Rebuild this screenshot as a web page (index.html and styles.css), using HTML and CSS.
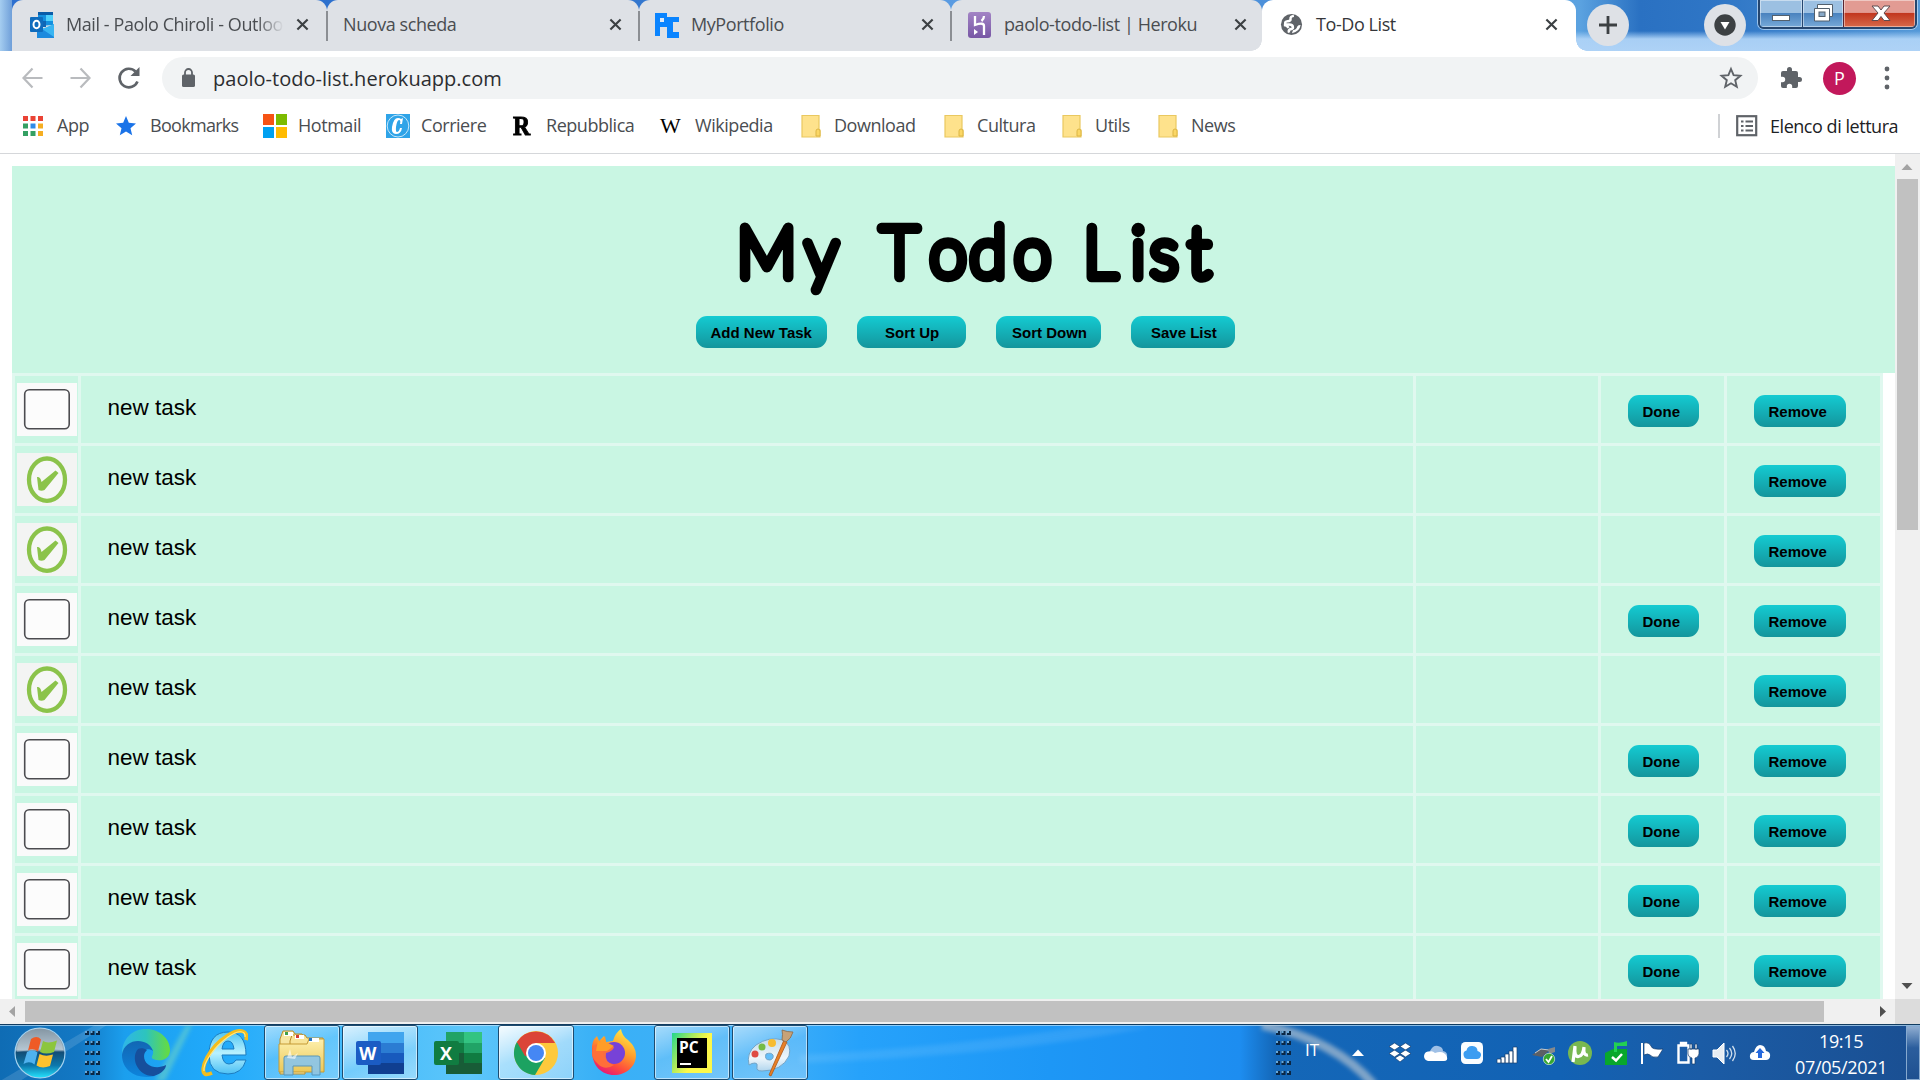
FILE: index.html
```html
<!DOCTYPE html>
<html lang="it">
<head>
<meta charset="utf-8">
<title>To-Do List</title>
<link rel="stylesheet" href="styles.css">
</head>
<body>
<svg class="defs" width="0" height="0">
  <defs>
    <symbol id="close" viewBox="0 0 14 14"><path d="M1.500 1.500l11 11M12.500 1.500l-11 11" stroke="#3c4043" stroke-width="2.300" fill="none"/></symbol>
    <symbol id="folder" viewBox="0 0 20 24"><path d="M1 1.500h17v14.500h1v7H1z" fill="#fee28c" stroke="#e9c860" stroke-width="1.200"/><path d="M15 22v-5a2 2 0 0 1 4 0v5z" fill="#fbd766" stroke="#dcb645"/></symbol>
    <symbol id="empty" viewBox="0 0 60 53"><rect width="60" height="53" fill="#fafafa"/><rect x="7.700" y="6.700" width="44.500" height="39" rx="4.500" fill="#fcfcfc" stroke="#4c4c50" stroke-width="1.600"/></symbol>
    <symbol id="checked" viewBox="0 0 60 53"><rect width="60" height="53" fill="#f3f4f3"/><ellipse cx="30" cy="26.700" rx="18" ry="21.200" fill="#f6f7f5" stroke="#8bc34a" stroke-width="4.300"/><path d="M20 24q3.500-.500 4.500 5L38.500 17.500l3 2.500L27.500 37q-3 1.500-6 0z" fill="#8bc34a"/></symbol>
    <symbol id="grip" viewBox="0 0 15 46"><g fill="#0b2745"><path d="M0 1h4v4H0zM5.500 1h4v4h-4zM11 1h4v4h-4zM0 11h4v4H0zM5.500 11h4v4h-4zM11 11h4v4h-4zM0 21h4v4H0zM5.500 21h4v4h-4zM11 21h4v4h-4zM0 31h4v4H0zM5.500 31h4v4h-4zM11 31h4v4h-4zM0 41h4v4H0zM5.500 41h4v4h-4zM11 41h4v4h-4z"/></g><g fill="#6aa9d8"><path d="M0 1h2v2H0zM5.500 1h2v2h-2zM11 1h2v2h-2zM0 11h2v2H0zM5.500 11h2v2h-2zM11 11h2v2h-2zM0 21h2v2H0zM5.500 21h2v2h-2zM11 21h2v2h-2zM0 31h2v2H0zM5.500 31h2v2h-2zM11 31h2v2h-2zM0 41h2v2H0zM5.500 41h2v2h-2zM11 41h2v2h-2z"/></g></symbol>
    <linearGradient id="gOrb" x2="0" y2="1"><stop offset="0" stop-color="#5a7183"/><stop offset=".44" stop-color="#9db4c4"/><stop offset=".48" stop-color="#124c75"/><stop offset=".75" stop-color="#0c78ad"/><stop offset="1" stop-color="#25e5ff"/></linearGradient>
    <linearGradient id="gEdge"><stop offset="0" stop-color="#2fb5ea"/><stop offset=".5" stop-color="#2dc4bd"/><stop offset="1" stop-color="#68dc3c"/></linearGradient>
    <linearGradient id="gEdgeB" x2="0" y2="1"><stop offset="0" stop-color="#1266b4"/><stop offset="1" stop-color="#0d84dc"/></linearGradient>
    <linearGradient id="gIe" x2="0" y2="1"><stop offset="0" stop-color="#4fc5f2"/><stop offset=".5" stop-color="#b8f1ff"/><stop offset="1" stop-color="#4cc0f4"/></linearGradient>
    <linearGradient id="gFold" x2="0" y2="1"><stop offset="0" stop-color="#fdf0ae"/><stop offset="1" stop-color="#ecc857"/></linearGradient>
    <linearGradient id="gFire" x1=".8" x2=".3" y2="1"><stop offset="0" stop-color="#fff04a"/><stop offset=".45" stop-color="#ff9a2a"/><stop offset=".75" stop-color="#ff4c3d"/><stop offset="1" stop-color="#e3167c"/></linearGradient>
    <linearGradient id="gPc" y2=".6"><stop offset="0" stop-color="#20d78c"/><stop offset=".45" stop-color="#b6ec5a"/><stop offset=".7" stop-color="#fcf84a"/></linearGradient>
    <linearGradient id="gPal" x2="0" y2="1"><stop offset="0" stop-color="#c5dcea"/><stop offset=".6" stop-color="#eef6fb"/><stop offset="1" stop-color="#b2d6ee"/></linearGradient>
    <linearGradient id="gHk" x2="0" y2="1"><stop offset="0" stop-color="#a384c5"/><stop offset="1" stop-color="#7857a5"/></linearGradient>
  </defs>
</svg>

<div class="tabstrip">
  <div class="tab first">
    <svg class="fav" viewBox="0 0 24 26"><path d="M8 0h15v13L8 14z" fill="#1490df"/><path d="M8 0h15v3H8z" fill="#0a5ca8"/><path d="M16 3h7v6h-7z" fill="#50d0fa"/><path d="M8 9h8v6H8z" fill="#1066b5"/><path d="M7 13l9 5 8-6v14H7z" fill="#1c8ade"/><path d="M24 12v13L12 17z" fill="#39b5f2"/><rect y="5" width="13" height="15" rx="1" fill="#0f6cbd"/><ellipse cx="6.500" cy="12.500" rx="3" ry="3.800" fill="none" stroke="#fff" stroke-width="2"/></svg>
    <span class="title faded">Mail - Paolo Chiroli - Outloo</span><svg class="x"><use href="#close"/></svg>
  </div>
  <div class="tab plain"><span class="title">Nuova scheda</span><svg class="x"><use href="#close"/></svg></div>
  <div class="tab">
    <svg class="fav" viewBox="0 0 24 26"><path d="M0 1h12v4h12v5h-6v10h6v6H12V15H5v9H0z" fill="#0a84ff"/><path d="M5 6h4v4H5z" fill="#dfe9f5"/></svg>
    <span class="title">MyPortfolio</span><svg class="x"><use href="#close"/></svg>
  </div>
  <div class="tab before">
    <svg class="fav" viewBox="0 0 24 26"><rect width="23" height="26" rx="3" fill="url(#gHk)"/><path d="M7 4v9q9-3 9 1v9M16 4q0 3-2.500 5" fill="none" stroke="#fff" stroke-width="2.300"/><path d="M6 17l4 3-4 3z" fill="#fff"/></svg>
    <span class="title">paolo-todo-list | Heroku</span><svg class="x"><use href="#close"/></svg>
  </div>
  <div class="tab active">
    <svg class="fav globe" viewBox="0 0 24 26"><circle cx="12" cy="13" r="11" fill="#5f6368"/><path d="M14.500 4q-4 .500-3.500 3.500 0 2-3 2-3 .500-2.500 2.500.500 1 4 1 4 0 4 3 0 1.500-3 2-2 1-1 3.500M4 13.500q3 0 5 3" fill="none" stroke="#fff" stroke-width="2.600"/><path d="M12.500 22l1-3q4-1 4.500-4 1-1.500 3.500-1.500-1 7-9 8.500z" fill="#fff"/></svg>
    <span class="title">To-Do List</span><svg class="x"><use href="#close"/></svg>
  </div>
  <div class="round plus"><svg viewBox="0 0 42 42"><path d="M21 12v18M12 21h18" stroke="#3c4043" stroke-width="2.800"/></svg></div>
  <div class="round drop"><svg viewBox="0 0 42 42"><circle cx="21" cy="21" r="10.700" fill="#3c4043"/><path d="M16.500 18h9L21 25.500z" fill="#fff"/></svg></div>
  <div class="winbtns">
    <span class="wb min"><svg viewBox="0 0 42 27"><rect x="12.500" y="15.500" width="17" height="5" fill="#fff" stroke="#53606d"/></svg></span>
    <span class="wb max"><svg viewBox="0 0 41 27"><path d="M14.500 4.500h15v12h-15z" fill="#fff" stroke="#53606d"/><path d="M11.500 8.500h15v12.500h-15z" fill="#fff" stroke="#53606d"/><rect x="16" y="12" width="6" height="4.500" fill="#88a9c8" stroke="#53606d"/></svg></span>
    <span class="wb cls"><svg viewBox="0 0 72 27"><path d="M28 6h6l3 4 3-4h6l-6 7 6 7.500h-6l-3-4-3 4h-6l6-7.500z" fill="#fff" stroke="#5f4c50"/></svg></span>
  </div>
</div>

<div class="toolbar">
  <div class="nav">
    <svg viewBox="0 0 24 24"><path d="M21.500 12H3M11.500 2.500L2.500 12l9 9.500" fill="none" stroke="#b9bbbe" stroke-width="2.200"/></svg>
    <svg viewBox="0 0 24 24"><path d="M1.500 12H20M11.500 2.500l9 9.500-9 9.500" fill="none" stroke="#b9bbbe" stroke-width="2.200"/></svg>
    <svg viewBox="0 0 24 24"><path d="M20.500 15.500A9.300 9.300 0 1 1 18.500 5.500" fill="none" stroke="#5f6368" stroke-width="2.600"/><path d="M22.500 1v9h-9z" fill="#5f6368"/></svg>
  </div>
  <div class="omnibox">
    <svg class="lock" viewBox="0 0 14 20"><rect y="6.500" width="13" height="12.500" rx="1.600" fill="#5f6368"/><path d="M3 7V4.500a3.500 3.500 0 0 1 7 0V7" fill="none" stroke="#5f6368" stroke-width="1.800"/></svg>
    <span class="url">paolo-todo-list.herokuapp.com</span>
    <svg class="star" viewBox="0 0 24 24"><path d="M12 3l2.600 6.200 6.800.600-5.200 4.400 1.600 6.600-5.800-3.500-5.800 3.500 1.600-6.600-5.200-4.400 6.800-.600z" fill="none" stroke="#5f6368" stroke-width="1.900"/></svg>
  </div>
  <svg class="puzzle" viewBox="0 0 24 24"><path d="M20.500 11H19V7a2 2 0 0 0-2-2h-4V3.500a2.500 2.500 0 0 0-5 0V5H4a2 2 0 0 0-2 2v3.800h1.500a2.700 2.700 0 0 1 0 5.400H2V20a2 2 0 0 0 2 2h3.800v-1.500a2.700 2.700 0 0 1 5.400 0V22H17a2 2 0 0 0 2-2v-4h1.500a2.500 2.500 0 0 0 0-5z" fill="#5f6368"/></svg>
  <span class="avatar">P</span>
  <svg class="dots" viewBox="0 0 6 24"><g fill="#5f6368"><circle cx="3" cy="3" r="2.400"/><circle cx="3" cy="12" r="2.400"/><circle cx="3" cy="21" r="2.400"/></g></svg>
</div>

<div class="bookmarks">
  <div class="bm"><svg viewBox="0 0 20 24"><path d="M0 2h5v5H0zM7.500 2h5v5h-5zM15 2h5v5h-5z" fill="#ea4335"/><path d="M0 9.500h5v5H0zM0 17h5v5H0zM7.500 17h5v5h-5z" fill="#34a063"/><path d="M7.500 9.500h5v5h-5z" fill="#2d8be8"/><path d="M15 9.500h5v5h-5zM15 17h5v5h-5z" fill="#f5ae22"/></svg><span class="s1">App</span></div>
  <div class="bm"><svg viewBox="0 0 20 24"><path d="M10 2l2.800 6.800 7.200.600-5.500 4.800 1.700 7L10 17.500l-6.200 3.700 1.700-7L0 9.400l7.200-.600z" fill="#1a73e8"/></svg><span class="s1 tight">Bookmarks</span></div>
  <div class="bm"><svg viewBox="0 0 24 24"><path d="M0 0h11v11H0z" fill="#f65314"/><path d="M13 0h11v11H13z" fill="#7cbb00"/><path d="M0 13h11v11H0z" fill="#00a1f1"/><path d="M13 13h11v11H13z" fill="#ffbb00"/></svg><span class="s2">Hotmail</span></div>
  <div class="bm"><svg viewBox="0 0 24 24"><rect width="24" height="24" fill="#2fa4e8"/><ellipse cx="12" cy="12" rx="10.800" ry="11" fill="none" stroke="#c7e7fa"/><path d="M17 4l-1 6h-2q1-4-1-4-2 0-3 7-.500 5 1 5 2 0 3-4h2q-1 6-6 6-5 0-4-7Q7.500 4 12 4q2 0 3 1z" fill="#fff"/></svg><span class="s2">Corriere</span></div>
  <div class="bm"><b class="letter r">R</b><span>Repubblica</span></div>
  <div class="bm"><b class="letter w">W</b><span class="s2">Wikipedia</span></div>
  <div class="bm"><svg viewBox="0 0 20 24"><use href="#folder"/></svg><span>Download</span></div>
  <div class="bm"><svg viewBox="0 0 20 24"><use href="#folder"/></svg><span>Cultura</span></div>
  <div class="bm"><svg viewBox="0 0 20 24"><use href="#folder"/></svg><span>Utils</span></div>
  <div class="bm"><svg viewBox="0 0 20 24"><use href="#folder"/></svg><span>News</span></div>
  <div class="bm reading"><svg viewBox="0 0 22 24"><rect x="1.200" y="2.200" width="19" height="19" fill="none" stroke="#5f6368" stroke-width="2.200"/><path d="M5 7.500h2.500M9.500 7.500h7.500M5 12h2.500M9.500 12h7.500M5 16.500h2.500M9.500 16.500h7.500" stroke="#5f6368" stroke-width="2.200"/></svg><span>Elenco di lettura</span></div>
</div>

<div class="viewport">
  <div class="page">
    <header class="hero">
      <svg class="heading" viewBox="0 0 500 96" role="heading" aria-level="1">
        <g class="brush" transform="scale(.95 1)">
          <text y="71" x="1 73">My</text>
          <text y="71" x="152 204 246 293">Todo</text>
          <text y="71" x="366 416 436 476">List</text>
        </g>
        <circle cx="401.500" cy="23.500" r="5"/>
      </svg>
      <div class="actions">
        <button class="btn add">Add New Task</button><button class="btn up">Sort Up</button><button class="btn down">Sort Down</button><button class="btn save">Save List</button>
      </div>
    </header>
    <div class="tasks">
      <div class="cell"><svg class="mark"><use href="#empty"/></svg></div><div class="cell name">new task</div><div class="cell"></div><div class="cell act"><button class="btn">Done</button></div><div class="cell act"><button class="btn rem">Remove</button></div>
      <div class="cell"><svg class="mark"><use href="#checked"/></svg></div><div class="cell name">new task</div><div class="cell"></div><div class="cell"></div><div class="cell act"><button class="btn rem">Remove</button></div>
      <div class="cell"><svg class="mark"><use href="#checked"/></svg></div><div class="cell name">new task</div><div class="cell"></div><div class="cell"></div><div class="cell act"><button class="btn rem">Remove</button></div>
      <div class="cell"><svg class="mark"><use href="#empty"/></svg></div><div class="cell name">new task</div><div class="cell"></div><div class="cell act"><button class="btn">Done</button></div><div class="cell act"><button class="btn rem">Remove</button></div>
      <div class="cell"><svg class="mark"><use href="#checked"/></svg></div><div class="cell name">new task</div><div class="cell"></div><div class="cell"></div><div class="cell act"><button class="btn rem">Remove</button></div>
      <div class="cell"><svg class="mark"><use href="#empty"/></svg></div><div class="cell name">new task</div><div class="cell"></div><div class="cell act"><button class="btn">Done</button></div><div class="cell act"><button class="btn rem">Remove</button></div>
      <div class="cell"><svg class="mark"><use href="#empty"/></svg></div><div class="cell name">new task</div><div class="cell"></div><div class="cell act"><button class="btn">Done</button></div><div class="cell act"><button class="btn rem">Remove</button></div>
      <div class="cell"><svg class="mark"><use href="#empty"/></svg></div><div class="cell name">new task</div><div class="cell"></div><div class="cell act"><button class="btn">Done</button></div><div class="cell act"><button class="btn rem">Remove</button></div>
      <div class="cell"><svg class="mark"><use href="#empty"/></svg></div><div class="cell name">new task</div><div class="cell"></div><div class="cell act"><button class="btn">Done</button></div><div class="cell act"><button class="btn rem">Remove</button></div>
    </div>
  </div>
  <div class="vbar">
    <svg viewBox="0 0 25 25"><path d="M6.500 16h11L12 10z" fill="#a3a3a3"/></svg>
    <div class="vthumb"></div>
    <svg class="end" viewBox="0 0 25 25"><path d="M6.500 9h11L12 15z" fill="#505050"/></svg>
  </div>
  <div class="hbar">
    <svg viewBox="0 0 25 25"><path d="M15 7v11l-6-5.500z" fill="#a3a3a3"/></svg>
    <div class="hthumb"></div>
    <svg class="end" viewBox="0 0 25 25"><path d="M10 7v11l6-5.500z" fill="#505050"/></svg>
  </div>
  <div class="corner"></div>
</div>

<div class="taskbar">
  <svg class="streaks" viewBox="0 0 1920 56" preserveAspectRatio="none">
    <path d="M0 56L95 0h12L20 56z" fill="#fff" opacity=".13"/>
    <path class="soft" d="M155 56L186 0h6l-27 56z" fill="#b6ff9c" opacity=".3"/>
    <path class="soft" d="M800 30Q950 22 1080 2h70Q1010 30 800 38z" fill="#fff" opacity=".09"/>
    <path class="soft" d="M1262 0Q1335 15 1374 60" fill="none" stroke="#b9c6d2" stroke-width="9" opacity=".65"/>
  </svg>
  <svg class="orb" viewBox="0 0 52 52"><circle cx="26" cy="26" r="25" fill="url(#gOrb)" stroke="#a6d2ee" stroke-width="1.200"/><path d="M3 25a23 23 0 0 1 46-2Q26 20 3 25z" fill="#fff" opacity=".25"/><path d="M17 12q6-4 10 .500l-3 12q-5-4-10-1z" fill="#ef5b26"/><path d="M29 14q5 3 14-.500l-3 11.500q-8 3-14 0z" fill="#8cc63e"/><path d="M13 25q6-3 10.500.500l-3 12q-5-4-11-.500z" fill="#4fb2ee"/><path d="M25.500 27q6 3 13.500.500l-3 11.500q-8 3-13.500-.500z" fill="#fdc22d"/></svg>
  <svg class="grip"><use href="#grip"/></svg>
  <div class="apps">
    <span class="app"><svg viewBox="0 0 48 48"><path d="M0 25C0 10 10 0 24 0s24 10 24 21c0 10-10 12-17 9-3-2 1-4 0-8C29 13 8 9 0 25z" fill="url(#gEdge)"/><path d="M0 26c2-18 27-18 31-4-5-4-14-1-14 8s7 17 16 17C15 51 0 42 0 26z" fill="url(#gEdgeB)"/><path d="M16 20c-8 9 0 28 16 27 7-2 12-7 12-11-10 5-22 1-22-9 0-3 2-5 3-6-3-2-7-2-9-1z" fill="#164f9c"/></svg></span>
    <span class="app"><svg viewBox="0 0 48 48"><path d="M9 26q0-23 19-23 18 0 18 23H22q1 9 7 9 5 0 7-4h10q-4 14-18 14Q9 45 9 26zm13-6h12q-1-8-6-8t-6 8z" fill="url(#gIe)" stroke="#1c7cc0"/><path d="M46 11C49 2 40-2 27 7 9 18-1 41 5 45q2 1 7-1" fill="none" stroke="#f5bd1c" stroke-width="3.800"/><path d="M45 8C46 1 38 1 28 8 14 18 3 34 4 42" fill="none" stroke="#ffe887" stroke-width="1.200"/></svg></span>
    <span class="app on"><svg viewBox="0 0 48 48"><path d="M2 10L5 2h10l2 3h7l3 4v36H2z" fill="#f7e6a2" stroke="#b78d2c"/><path d="M12 12l2-6h13l2 3h16v32H12z" fill="#f8e497" stroke="#b78d2c"/><path d="M1 15h28l2-5h15v33H1z" fill="url(#gFold)" stroke="#c69b35"/><path d="M6 3h9v4H6z" fill="#fff"/><path d="M7 3h3v3H7z" fill="#41a047"/><path d="M17 6h9v4h-9z" fill="#fff"/><path d="M18 6h3v3h-3z" fill="#d33c32"/><path d="M31 9h10v4H31z" fill="#fff"/><path d="M31 9h3v3h-3z" fill="#2674c4"/><path d="M6 29q0-2 2-2h32q2 0 2 2v17h-8v-9H15v9H6z" fill="#8ec6e6" stroke="#5593b9" opacity=".95"/><path d="M9 29l3-9 2 8 6-4-3 6z" fill="#fff" opacity=".6"/></svg></span>
    <span class="app on bright"><svg viewBox="0 0 48 48"><path d="M12 3h36v11H12z" fill="#41a5ee"/><path d="M12 14h36v10H12z" fill="#2b7cd3"/><path d="M12 24h36v10H12z" fill="#185abd"/><path d="M12 34h36v11H12z" fill="#103f91"/><rect y="12" width="25" height="24" rx="2" fill="#1b5cc4"/><text class="office" x="3" y="30.500">W</text></svg></span>
    <span class="app"><svg viewBox="0 0 48 48"><path d="M12 3h36v42H12z" fill="#21a366"/><path d="M30 3h18v11H30z" fill="#33c481"/><path d="M12 14h18v10H12z" fill="#107c41"/><path d="M12 24h36v10H12z" fill="#107c41"/><path d="M12 24h18v21H12z" fill="#185c37"/><path d="M30 34h18v11H30z" fill="#185c37"/><rect y="12" width="25" height="24" rx="2" fill="#107c41"/><text class="office" x="6" y="30.500">X</text></svg></span>
    <span class="app on hot"><svg viewBox="0 0 48 48"><circle cx="24" cy="24" r="22" fill="#fdc93c"/><path d="M24 24L4.900 13A22 22 0 0 0 23 46l10-17z" fill="#1ca261"/><path d="M4.900 13A22 22 0 0 1 43.100 14H24v12L13 27z" fill="#db4437"/><circle cx="24" cy="24" r="10" fill="#fff"/><circle cx="24" cy="24" r="8" fill="#4587f4"/></svg></span>
    <span class="app"><svg viewBox="0 0 48 48"><path d="M2 22Q1 12 7 7l2 5 5-5 2 6 7-1Q25 4 31 0q1 7 7 11 8 7 8 15c0 12-10 20-22 20S2 37 2 22z" fill="url(#gFire)"/><circle cx="24" cy="24" r="11" fill="#7742d8"/><path d="M2 24Q3 12 15 14q-2 4 9 4-1 4-8 6-2 9 8 12-9 6-16-1Q2 30 2 24z" fill="#ff7139" opacity=".95"/><path d="M8 11l2 3 5-7 1 6 8 4-7 5-11 0z" fill="#ff9d27"/></svg></span>
    <span class="app on"><svg viewBox="0 0 48 48"><rect x="4" y="4" width="40" height="40" fill="url(#gPc)"/><rect x="9" y="9" width="30" height="30"/><text class="pc" x="11" y="24">PC</text><path d="M12 34h11v2H12z" fill="#fff"/></svg></span>
    <span class="app on"><svg viewBox="0 0 48 48"><path d="M3 36Q0 24 10 16q13-9 27-5 9 5 6 16-7 15-27 15-6 0-5-4t-2-4-6 2zM20 25q-2 6 4 6 4-1 3-5-2-3-7-1z" fill="url(#gPal)" stroke="#72a4c7" fill-rule="evenodd"/><circle cx="9" cy="25" r="3.500" fill="#df4b43"/><circle cx="16" cy="18" r="3.500" fill="#75bb45"/><circle cx="26" cy="14" r="4" fill="#f7bc31"/><path d="M38 11l3 2-16 34-2-1z" fill="#e98027" stroke="#ad5715" stroke-width=".8"/><path d="M36 1q5 2 11 2-2 7-7 10l-4-2q1-6 0-10z" fill="#c8a278" stroke="#8c6847" stroke-width=".8"/></svg></span>
  </div>
  <svg class="grip right"><use href="#grip"/></svg>
  <span class="lang">IT</span>
  <svg class="chev" viewBox="0 0 14 9"><path d="M1 8l6-6.500L13 8z" fill="#fff"/></svg>
  <div class="tray">
    <svg viewBox="0 0 24 24"><path d="M6.500 2l5.500 3.500L6.500 9 1 5.500zM17.500 2L23 5.500 17.500 9 12 5.500zM6.500 9l5.500 3.500L6.500 16 1 12.500zM17.500 9l5.500 3.500-5.500 3.500-5.500-3.500zM12 14l5 3-5 4-5-4z" fill="#fff" stroke="#123c70" stroke-width=".7"/></svg>
    <svg viewBox="0 0 24 24"><path d="M2 14q0-4 4-4 3-6 8-5 5 1 5 5 5 1 4 6z" fill="#9fc0e6"/><path d="M0 15q1-5 5-4 3-2 6 1 9-3 12 4 1 4-3 4H4q-4-1-4-5z" fill="#fff"/></svg>
    <svg viewBox="0 0 24 24"><rect x="1" y="1" width="22" height="22" rx="4.500" fill="#fafdff"/><path d="M3.500 13q0-3 3-3.500 1-5 6-4.500 5 .500 5 5 4 1 3.500 4.500-1 3.500-4 3.500H8q-4.500 0-4.500-5z" fill="#3c9df1"/></svg>
    <svg viewBox="0 0 24 24"><g fill="#fff" stroke="#173f6e" stroke-width=".7"><path d="M1 18h4v4H1zM5 16h4v6H5zM9 13h4v9H9zM13 10h4v12h-4zM17 6h4v16h-4z"/></g></svg>
    <svg viewBox="0 0 24 24"><path d="M0 14l9-6 9 1-8 7z" fill="#5c6065"/><path d="M3 12l6-4 8 1" stroke="#c7cacc" fill="none"/><path d="M16 8l7-2v5l-6 2z" fill="#85898c"/><circle cx="17" cy="18" r="5.700" fill="#35a730" stroke="#d7edce" stroke-width=".7"/><path d="M14 18l2.500 3 3.500-6" fill="none" stroke="#fff" stroke-width="1.800"/></svg>
    <svg viewBox="0 0 24 24"><circle cx="12" cy="12" r="12" fill="#78b850"/><path d="M7 5L5 21M7 6q-1 10 3.500 9.500Q15 15 16 6q-1 9 4 8" fill="none" stroke="#fff" stroke-width="3.200"/></svg>
    <svg viewBox="0 0 24 24"><path d="M1 12l8-4h14v16H1z" fill="#08a72b"/><path d="M10 1q5 2 13-1v5H13v6h-3z" fill="#22d052"/><path d="M8 16l4 3.500L18 13" fill="none" stroke="#fff" stroke-width="2.500"/></svg>
    <svg viewBox="0 0 24 24"><path d="M2 2v21" stroke="#fff" stroke-width="2"/><path d="M4 2q5-1 7 3 1 4 12 3l-5 8q-6 1-8-2-2-2-6 0z" fill="#fff" stroke="#163c6b" stroke-width=".7"/></svg>
    <svg viewBox="0 0 24 24"><path d="M2.500 4.500h10v17h-10zM5 4V2h5v2" fill="none" stroke="#fff" stroke-width="2.400"/><path d="M12 8h11v5q-1 4-4 4v6h-3v-6q-4-1-4-4zM14 3h2v5h-2zM19 3h2v5h-2z" fill="#fff" stroke="#163c6b" stroke-width=".7"/></svg>
    <svg viewBox="0 0 24 24"><path d="M1 9h4l7-7v21l-7-7H1z" fill="#e7edf3" stroke="#fff"/><path d="M14.500 9q3 3.500 0 7M17.500 7q4.500 5.500 0 11M20.500 5q5.500 7.500 0 15" fill="none" stroke="#cfdeec" stroke-width="1.300"/></svg>
    <svg viewBox="0 0 24 24"><path d="M6 19Q1 19 2 14q1-3 4-3Q8 4 12 4q5 0 6 6 5 1 4 6-1 3-4 3z" fill="#fff"/><path d="M12 7l4.500 5H14v5h-4v-5H7.500z" fill="#2569dd"/></svg>
  </div>
  <div class="clock"><span>19:15</span><span>07/05/2021</span></div>
  <div class="peek"></div>
</div>
</body>
</html>
```
FILE: styles.css
```css
* { box-sizing: border-box; }
body {
  margin: 0;
  width: 1920px;
  height: 1080px;
  overflow: hidden;
  display: flex;
  flex-direction: column;
  background: #fff;
  font-family: "Open Sans", "Noto Sans", sans-serif;
  color: #4a4d51;
}
svg { display: block; flex: none; }
.defs { position: absolute; }

/* tab strip */
.tabstrip {
  height: 51px;
  flex: none;
  display: flex;
  padding-left: 12px;
  background:
    linear-gradient(90deg, #a5cdf0 0, #6f9fd9 12px, transparent 12px),
    linear-gradient(180deg, transparent 31px, rgba(174, 211, 247, .95) 39px, #aed2f6 100%),
    linear-gradient(90deg, #2c6fd0 0, #2e72cc 600px, #5a9be2 940px, #4c90da 1260px, #5ba2e0 1580px, #2a71c2 1640px, #2f76c6 1720px, #5599d8 1920px);
}
.tab {
  position: relative;
  width: 312px;
  flex: none;
  display: flex;
  align-items: center;
  padding: 0 17px 2px 16px;
  background: #dee1e6;
  border-radius: 11px 11px 0 0;
}
.tab.first { width: 315px; padding: 0 18px 2px 18px; }
.tab:not(.active):not(.before)::after {
  content: "";
  position: absolute;
  right: -1px;
  top: 11px;
  width: 2px;
  height: 30px;
  background: #8b8e93;
  z-index: 1;
}
.tab.before { width: 311px; padding-right: 15px; padding-left: 17px; }
.tab.active { width: 314px; background: #fff; color: #35363a; padding-right: 18px; }
.tab.active::before,
.tab.active::after {
  content: "";
  position: absolute;
  right: -11px;
  bottom: 0;
  width: 11px;
  height: 11px;
  background: radial-gradient(circle at 100% 0, transparent 10.500px, #fff 11px);
}
.tab.active::before { right: auto; left: -11px; background: radial-gradient(circle at 0 0, transparent 10.500px, #fff 11px); }
.fav { width: 24px; height: 26px; margin-right: 12px; }
.globe { width: 23px; height: 25px; margin: 0 13px 0 2px; }
.title { font-size: 18px; line-height: 26px; white-space: nowrap; flex: 1; letter-spacing: -.42px; padding-bottom: 1px; }
.faded { -webkit-mask-image: linear-gradient(90deg, #000 190px, transparent 218px); mask-image: linear-gradient(90deg, #000 190px, transparent 218px); letter-spacing: -.42px; }
.x { width: 13px; height: 13px; }
.round { width: 42px; height: 42px; border-radius: 50%; background: #dee1e6; flex: none; margin-top: 4px; }
.plus { margin-left: 11px; }
.drop { margin-left: 75px; }
.winbtns {
  display: flex;
  height: 29px;
  margin-left: 12px;
  border: 2px solid #25466f;
  border-top: 0;
  border-radius: 0 0 6px 6px;
  box-shadow: 0 0 0 1px rgba(200, 225, 250, .7);
  overflow: hidden;
}
.wb { display: block; height: 27px; background: linear-gradient(#9cc0e2 0 48%, #4a83bf 50%, #77a9d8); box-shadow: inset 0 0 0 1px rgba(255, 255, 255, .45); }
.wb svg { height: 27px; }
.min { width: 42px; }
.max { width: 41px; border-left: 1px solid #25466f; }
.cls { width: 72px; border-left: 1px solid #5b2530; background: linear-gradient(#e29b93 0 46%, #c2371f 50%, #d6694a); }

/* toolbar */
.toolbar { height: 57px; flex: none; display: flex; align-items: center; padding: 0 29px 3px 21px; }
.nav { display: flex; gap: 24px; width: 141px; }
.nav svg { width: 24px; height: 24px; }
.omnibox { width: 1596px; height: 42px; border-radius: 21px; background: #f1f3f4; display: flex; align-items: center; padding: 0 15px 0 20px; }
.lock { width: 14px; height: 20px; margin-right: 17px; }
.url { font-size: 20px; line-height: 28px; letter-spacing: .02px; color: #2c2d30; flex: 1; padding-top: 1px; }
.star { width: 24px; height: 24px; }
.puzzle { width: 24px; height: 24px; margin-left: 21px; }
.avatar { width: 33px; height: 33px; margin-left: 20px; border-radius: 50%; background: #c2185b; color: #fff; font-size: 18px; line-height: 33px; text-align: center; }
.dots { width: 6px; height: 24px; margin-left: 28px; }

/* bookmarks bar */
.bookmarks {
  height: 46px;
  flex: none;
  display: grid;
  grid-template-columns: 93px 147px 123px 127px 147px 141px 143px 118px 96px 560px 1fr;
  padding: 0 0 10px 23px;
  border-bottom: 1px solid #d5d7da;
  font-size: 18px;
  letter-spacing: -.46px;
}
.bm { display: grid; grid-template-columns: 33px 1fr; align-items: center; white-space: nowrap; line-height: 24px; }
.bm svg { height: 24px; }
.bm span { padding-bottom: 1px; }
.tight { letter-spacing: -.7px; }
.s1 { padding-left: 1px; }
.s2 { padding-left: 2px; }
.letter { color: #000; font: bold 27px/24px "Liberation Serif", serif; }
.r { -webkit-text-stroke: 1px #000; transform: scaleX(.88); transform-origin: 0 50%; }
.w { font-size: 22px; font-weight: 400; }
.reading { grid-template-columns: 34px 1fr; border-left: 2px solid #d0d2d5; height: 24px; align-self: center; padding-left: 16px; color: #202124; }

/* page */
.viewport { height: 870px; flex: none; display: grid; grid-template: 845px 25px / 1895px 25px; }
.page { overflow: hidden; padding: 12px 0 0 12px; }
.hero { height: 207px; background: #c9f6e3; display: flex; flex-direction: column; padding: 40px 0 0 684px; }
.heading { width: 500px; height: 96px; margin-left: 40px; }
.brush { font: 100 70px "Lato Hairline", "Lato", sans-serif; fill: #000; stroke: #000; stroke-width: 10.500px; stroke-linejoin: round; stroke-linecap: round; }
.actions { display: flex; gap: 30px; margin-top: 14px; }
.btn {
  display: block;
  width: 71px;
  height: 32px;
  padding: 1px 0 0 14.500px;
  border: 0;
  border-radius: 11px;
  background: linear-gradient(#14cbd2, #14959c);
  color: #000;
  font: bold 15px/31px "Liberation Sans", Arial, sans-serif;
  text-align: left;
  white-space: nowrap;
}
.add { width: 131px; }
.up { width: 109px; padding-left: 28px; }
.down { width: 105px; padding-left: 16px; }
.save { width: 104px; padding-left: 20px; }
.rem { width: 92px; }
.tasks {
  width: 1871px;
  display: grid;
  grid-template-columns: 63px 1332px 182px 123px 153px;
  grid-auto-rows: 67px;
  gap: 3px;
  padding: 3px;
  background: #e0f8ef;
}
.cell { background: #c9f6e3; }
.mark { width: 60px; height: 53px; margin: 7px 0 0 2px; }
.name { padding-left: 26.500px; font: 22.500px/64px "Liberation Sans", Arial, sans-serif; color: #000; }
.act { padding: 19px 0 0 27px; }

.vbar { background: #f0f0f0; display: flex; flex-direction: column; }
.vbar svg, .hbar svg { width: 25px; height: 25px; }
.vthumb { width: 21px; height: 351px; margin-left: 2px; background: #c1c1c1; }
.end { margin-top: auto; }
.hbar { background: #f0f0f0; display: flex; }
.hthumb { width: 1799px; height: 21px; margin-top: 2px; background: #c1c1c1; }
.hbar .end { margin: 0 0 0 auto; }
.corner { background: #dcdcdc; }

/* taskbar */
.taskbar {
  position: relative;
  height: 56px;
  flex: none;
  display: flex;
  align-items: center;
  border-top: 1px solid #123c60;
  box-shadow: inset 0 1px 0 rgba(190, 225, 250, .7);
  background: linear-gradient(90deg, #0f6cb4 0, #1378c4 80px, #1b9fee 125px, #20a9fa 210px, #40b9fb 330px, #5dc6fa 470px, #39b0f6 600px, #41b0f8 760px, #26a2fb 860px, #1d97f6 1050px, #1d8df0 1240px, #1467b8 1275px, #1262b4 1560px, #1b5ca6 1700px, #1a4f92 1920px);
}
.streaks { position: absolute; left: 0; top: 0; width: 1920px; height: 56px; }
.soft { filter: blur(2px); }
.orb { position: relative; width: 52px; height: 52px; margin-left: 14px; }
.grip { position: relative; width: 15px; height: 46px; margin-left: 19px; }
.apps { position: relative; display: flex; margin-left: 7px; height: 55px; }
.app { width: 78px; height: 55px; display: flex; align-items: center; justify-content: center; border: 1px solid transparent; border-radius: 3px; }
.app svg { width: 48px; height: 48px; }
.app.on {
  width: 76px;
  margin: 0 1px;
  border-color: #1d4c70;
  box-shadow: inset 0 0 0 1px rgba(255, 255, 255, .55);
  background: linear-gradient(160deg, rgba(255, 255, 255, .55), rgba(255, 255, 255, .18) 45%, rgba(255, 255, 255, .28));
}
.app.bright { background: linear-gradient(160deg, rgba(255, 255, 255, .8), rgba(255, 255, 255, .25) 60%, rgba(255, 255, 255, .4)); }
.app.hot { background: linear-gradient(160deg, rgba(255, 255, 255, .95), rgba(255, 255, 255, .5) 50%, rgba(255, 255, 255, .4)); }
.office { font: bold 18px "Open Sans", sans-serif; fill: #fff; }
.pc { font: bold 15.500px "Open Sans", sans-serif; fill: #fff; }
.right { margin-left: 467px; }
.lang { position: relative; width: 46px; margin-left: 14px; color: #fff; font-size: 17px; line-height: 20px; padding-bottom: 5px; }
.chev { position: relative; width: 14px; height: 9px; margin-left: 1px; }
.tray { position: relative; display: flex; gap: 12px; margin-left: 23px; }
.tray svg { width: 24px; height: 24px; }
.clock { position: relative; width: 134px; margin-left: 4px; padding-top: 2px; display: flex; flex-direction: column; text-align: center; color: #fff; font-size: 18px; line-height: 26px; letter-spacing: -.35px; }
.peek { position: relative; width: 14px; height: 54px; border: 1px solid #86a9cf; background: linear-gradient(#8eacd0, #2b5e9d 40%, #1e5090); }
```
